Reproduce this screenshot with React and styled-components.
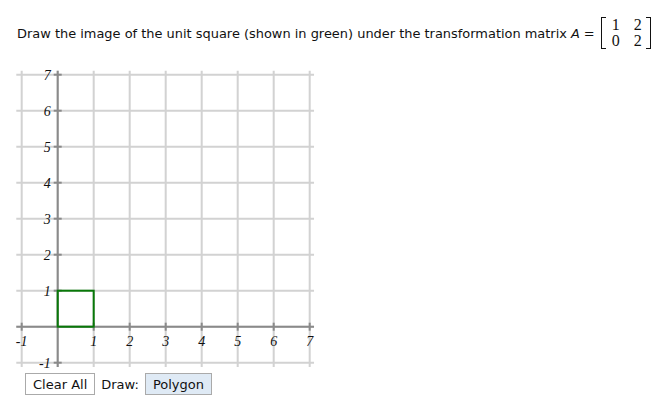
import * as React from 'react';
import styled, { createGlobalStyle } from 'styled-components';

const GlobalStyle = createGlobalStyle`
  body {
    margin: 0;
    background: #fff;
    color: #111;
    font-family: "DejaVu Sans", Verdana, sans-serif;
  }
`;

const Page = styled.div`
  padding: 17px 8px 0 8px;
`;

const Problem = styled.div`
  display: flex;
  width: max-content;
  align-items: center;
  margin: 0 0 14px 9px;
  font-size: 12.95px;
  white-space: nowrap;

  & > * {
    flex-shrink: 0;
  }
`;

const Var = styled.i`
  font-style: italic;
  margin: 0 4px;
`;

const Matrix = styled.div`
  display: flex;
  align-items: stretch;
  height: 32px;
  margin-left: 6px;
`;

const Bracket = styled.div`
  width: 4px;
  border: 1.3px solid #111;
  ${props => (props.right ? 'border-left: none;' : 'border-right: none;')}
`;

const Cells = styled.div`
  display: grid;
  grid-template-columns: 8px 8px;
  grid-template-rows: 16px 16px;
  column-gap: 14px;
  padding: 0 4px 0 6px;
`;

const Entry = styled.div`
  font-family: "Liberation Serif", "Times New Roman", serif;
  font-size: 16px;
  line-height: 16px;
  text-align: center;
`;

const Graph = styled.svg`
  display: block;
  width: 320px;
  height: 310px;
`;

const Toolbar = styled.div`
  display: flex;
  align-items: center;
  gap: 6px;
  margin-left: 17px;
  font-size: 13px;
`;

const Button = styled.button`
  font-family: "DejaVu Sans", Verdana, sans-serif;
  font-size: 13px;
  color: #111;
  height: 22px;
  padding: 0 7px;
  border: 1px solid #aaa;
  background: ${props => (props.active ? '#dfeaf5' : '#fff')};
  cursor: pointer;
`;

const OX = 49.7;
const OY = 263.7;
const U = 36;
const px = u => OX + U * u;
const py = v => OY - U * v;

const X_MIN = -1.15;
const X_MAX = 7.12;
const Y_MIN = -1.12;
const Y_MAX = 7.11;

const ticks = [-1, 1, 2, 3, 4, 5, 6, 7];
const grid = [-1, 0, 1, 2, 3, 4, 5, 6, 7];

function Plane() {
  return (
    <Graph viewBox="0 0 320 310">
      <g stroke="#d2d2d2" strokeWidth="2">
        {grid.map(n => (
          <line key={`v${n}`} x1={px(n)} x2={px(n)} y1={py(Y_MAX)} y2={py(Y_MIN)} />
        ))}
        {grid.map(n => (
          <line key={`h${n}`} x1={px(X_MIN)} x2={px(X_MAX)} y1={py(n)} y2={py(n)} />
        ))}
      </g>
      <g stroke="#8a8a8a" strokeWidth="2">
        <line x1={px(0)} x2={px(0)} y1={py(Y_MAX)} y2={py(Y_MIN)} />
        <line x1={px(X_MIN)} x2={px(X_MAX)} y1={py(0)} y2={py(0)} />
        {ticks.map(n => (
          <line key={`tx${n}`} x1={px(n)} x2={px(n)} y1={py(0) - 4} y2={py(0) + 4} />
        ))}
        {ticks.map(n => (
          <line key={`ty${n}`} x1={px(0) - 4} x2={px(0) + 4} y1={py(n)} y2={py(n)} />
        ))}
      </g>
      <rect
        x={px(0)}
        y={py(1)}
        width={U}
        height={U}
        fill="none"
        stroke="#087808"
        strokeWidth="2"
      />
      <g
        fontFamily='"Liberation Serif", "Times New Roman", serif'
        fontStyle="italic"
        fontSize="14"
        fill="#111"
      >
        {ticks.map(n => (
          <text key={`lx${n}`} x={px(n)} y={py(0) + 19} textAnchor="middle">
            {n}
          </text>
        ))}
        {ticks.map(n => (
          <text key={`ly${n}`} x={px(0) - 7} y={py(n) + 5} textAnchor="end">
            {n}
          </text>
        ))}
      </g>
    </Graph>
  );
}

export default function App() {
  return (
    <Page>
      <GlobalStyle />
      <Problem>
        <span>Draw the image of the unit square (shown in green) under the transformation matrix</span>
        <Var>A</Var>
        <span>=</span>
        <Matrix>
          <Bracket />
          <Cells>
            <Entry>1</Entry>
            <Entry>2</Entry>
            <Entry>0</Entry>
            <Entry>2</Entry>
          </Cells>
          <Bracket right />
        </Matrix>
      </Problem>
      <Plane />
      <Toolbar>
        <Button type="button">Clear All</Button>
        <span>Draw:</span>
        <Button type="button" active>Polygon</Button>
      </Toolbar>
    </Page>
  );
}
